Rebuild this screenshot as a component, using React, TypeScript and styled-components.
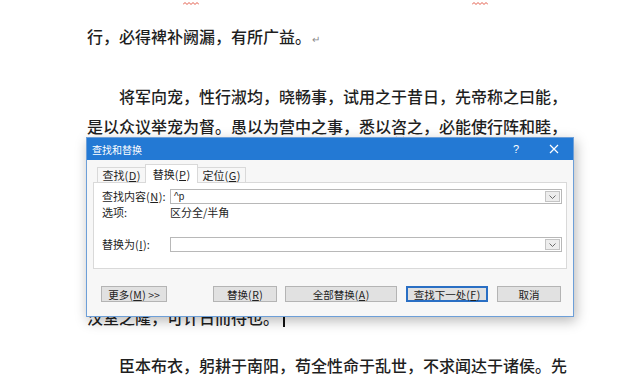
import React from "react";
import styled, { createGlobalStyle } from "styled-components";

const GlobalStyle = createGlobalStyle`
  html, body {
    margin: 0;
    padding: 0;
    background: #fff;
  }
  body {
    font-family: "Noto Sans CJK SC", "Noto Sans", sans-serif;
  }
`;

const Page = styled.div`
  position: relative;
  width: 642px;
  height: 391px;
  overflow: hidden;
  background: #fff;
  padding: 0 0 0 87px;
  box-sizing: border-box;
`;

const MarkRow = styled.div`
  height: 6px;
  display: flex;
  align-items: center;
`;

const Squiggle = styled.svg<{ $gap: number }>`
  margin-left: ${(p) => p.$gap}px;
  display: block;
`;

const Para = styled.div<{ $gap?: number }>`
  margin-top: ${(p) => p.$gap ?? 0}px;
`;

const Line = styled.div<{ $indent?: boolean }>`
  height: 30px;
  line-height: 30px;
  font-size: 16px;
  font-weight: 500;
  color: #1f1f1f;
  white-space: nowrap;
  padding-left: ${(p) => (p.$indent ? 32 : 0)}px;
`;

const ReturnMark = styled.span`
  font-size: 10px;
  font-weight: 400;
  color: #8a8a8a;
  margin-left: 1px;
`;

const Misspelled = styled.span`
  text-decoration: underline wavy #e0402a;
  text-decoration-thickness: 1px;
  text-underline-offset: 3px;
`;

const Caret = styled.span`
  display: inline-block;
  width: 2px;
  height: 15px;
  background: #111;
  margin-left: 4px;
  vertical-align: middle;
`;

/* dialog */

const Dialog = styled.div`
  position: absolute;
  left: 86px;
  top: 137px;
  width: 488px;
  height: 180px;
  box-sizing: border-box;
  background: #f7f7f7;
  border: 1px solid #6d9fd8;
  box-shadow: 2px 4px 12px rgba(0, 0, 0, 0.28);
  display: flex;
  flex-direction: column;
  font-family: "Noto Sans CJK SC", "Noto Sans", sans-serif;
  color: #1e1e1e;
`;

const TitleBar = styled.div`
  height: 22px;
  background: #2379d4;
  color: #fff;
  display: flex;
  align-items: center;
  padding-left: 5px;
  font-size: 10px;
`;

const TitleText = styled.span`
  flex: 1;
`;

const TitleButton = styled.div`
  width: 38px;
  height: 22px;
  display: flex;
  align-items: center;
  justify-content: center;
  font-size: 11px;
  font-family: "Liberation Sans", sans-serif;
`;

const Body = styled.div`
  flex: 1;
  display: flex;
  flex-direction: column;
  padding: 5px 6px 0 6px;
`;

const Tabs = styled.div`
  display: flex;
  align-items: flex-end;
  padding-left: 4px;
  height: 18px;
`;

const Tab = styled.div<{ $active?: boolean; $w: number }>`
  width: ${(p) => p.$w}px;
  height: ${(p) => (p.$active ? 19 : 16)}px;
  box-sizing: border-box;
  display: flex;
  align-items: center;
  justify-content: center;
  font-size: 11px;
  background: ${(p) => (p.$active ? "#fff" : "#f7f7f7")};
  border: 1px solid #d9d9d9;
  border-bottom: ${(p) => (p.$active ? "none" : "1px solid #d9d9d9")};
  margin-right: -1px;
  position: relative;
  z-index: ${(p) => (p.$active ? 2 : 1)};
`;

const Key = styled.span`
  text-decoration: underline;
  padding: 0 0.5px;
`;

const Panel = styled.div`
  background: #fff;
  border: 1px solid #d9d9d9;
  margin-top: -1px;
  padding: 6px 4px 16px 8px;
  display: grid;
  grid-template-columns: 68px 1fr;
  align-items: center;
`;

const Label = styled.div<{ $gapTop?: number; $h?: number }>`
  font-size: 11px;
  height: ${(p) => p.$h ?? 15}px;
  line-height: ${(p) => p.$h ?? 15}px;
  white-space: nowrap;
  margin-top: ${(p) => p.$gapTop ?? 0}px;
`;

const Combo = styled.div<{ $gapTop?: number }>`
  height: 15px;
  box-sizing: border-box;
  border: 1px solid #b8b8b8;
  background: #fff;
  display: flex;
  align-items: center;
  padding-left: 3px;
  font-size: 10px;
  margin-top: ${(p) => p.$gapTop ?? 0}px;
`;

const ComboValue = styled.span`
  flex: 1;
  font-family: "Liberation Sans", sans-serif;
`;

const DropButton = styled.div`
  width: 15px;
  height: 11px;
  box-sizing: border-box;
  border: 1px solid #c4c4c4;
  background: #ededed;
  display: flex;
  align-items: center;
  justify-content: center;
  margin-right: 1px;
`;

const Buttons = styled.div`
  display: flex;
  margin-top: 17px;
  padding-left: 8px;
`;

const Button = styled.div<{ $w: number; $gap?: number; $focus?: boolean }>`
  width: ${(p) => p.$w}px;
  height: 16px;
  margin-left: ${(p) => p.$gap ?? 0}px;
  box-sizing: border-box;
  background: #e1e1e1;
  border: 1px solid ${(p) => (p.$focus ? "#2a6fc4" : "#b4b4b4")};
  box-shadow: ${(p) => (p.$focus ? "inset 0 0 0 1px #2a6fc4" : "none")};
  display: flex;
  align-items: center;
  justify-content: center;
  font-size: 10.5px;
  white-space: nowrap;
  color: #222;
`;

const Chevron = () => (
  <svg width="9" height="6" viewBox="0 0 9 6">
    <path d="M1.5 1.5 L4.5 4.5 L7.5 1.5" fill="none" stroke="#6b6b6b" strokeWidth="1" />
  </svg>
);

const CloseIcon = () => (
  <svg width="10" height="10" viewBox="0 0 10 10">
    <path d="M1 1 L9 9 M9 1 L1 9" stroke="#fff" strokeWidth="1.2" />
  </svg>
);

const Wavy: React.FC<{ gap: number; w: number }> = ({ gap, w }) => {
  const pts: string[] = [];
  for (let x = 0; x <= w; x += 2) pts.push(`${x},${(x / 2) % 2 === 0 ? 3.5 : 1.5}`);
  return (
    <Squiggle $gap={gap} width={w} height={5} viewBox={`0 0 ${w} 5`}>
      <polyline points={pts.join(" ")} fill="none" stroke="#e35a48" strokeWidth="1" />
    </Squiggle>
  );
};

const FindReplaceDialog: React.FC = () => {
  return (
    <Dialog>
      <TitleBar>
        <TitleText>查找和替换</TitleText>
        <TitleButton>?</TitleButton>
        <TitleButton>
          <CloseIcon />
        </TitleButton>
      </TitleBar>
      <Body>
        <Tabs>
          <Tab $w={49}>
            查找(<Key>D</Key>)
          </Tab>
          <Tab $w={53} $active>
            替换(<Key>P</Key>)
          </Tab>
          <Tab $w={49}>
            定位(<Key>G</Key>)
          </Tab>
        </Tabs>
        <Panel>
          <Label>
            查找内容(<Key>N</Key>):
          </Label>
          <Combo>
            <ComboValue>^p</ComboValue>
            <DropButton>
              <Chevron />
            </DropButton>
          </Combo>
          <Label $h={12} $gapTop={2}>
            选项:
          </Label>
          <Label $h={12} $gapTop={2}>
            区分全/半角
          </Label>
          <Label $gapTop={19}>
            替换为(<Key>I</Key>):
          </Label>
          <Combo $gapTop={19}>
            <ComboValue />
            <DropButton>
              <Chevron />
            </DropButton>
          </Combo>
        </Panel>
        <Buttons>
          <Button $w={66}>
            更多(<Key>M</Key>) &gt;&gt;
          </Button>
          <Button $w={64} $gap={46}>
            替换(<Key>R</Key>)
          </Button>
          <Button $w={112} $gap={8}>
            全部替换(<Key>A</Key>)
          </Button>
          <Button $w={82} $gap={9} $focus>
            查找下一处(<Key>F</Key>)
          </Button>
          <Button $w={64} $gap={9}>
            取消
          </Button>
        </Buttons>
      </Body>
    </Dialog>
  );
};

const App: React.FC = () => {
  return (
    <>
      <GlobalStyle />
      <Page>
        <MarkRow>
          <Wavy gap={96} w={16} />
          <Wavy gap={273} w={16} />
        </MarkRow>
        <Para $gap={15}>
          <Line>
            行，必得裨补阙漏，有所广益。<ReturnMark>↵</ReturnMark>
          </Line>
        </Para>
        <Para $gap={30}>
          <Line $indent>将军向宠，性行淑均，晓畅事，试用之于昔日，先帝称之曰能，</Line>
          <Line>
            是以众议举宠为督。愚以为营中之事，悉以<Misspelled>咨</Misspelled>之，必能使行阵和睦，
          </Line>
          <Line>优劣得所。</Line>
        </Para>
        <Para $gap={11}>
          <Line $indent>亲贤臣，远小人，此先汉所以兴隆也；亲小人，远贤臣，此后汉</Line>
          <Line>所以倾颓也。先帝在时，每与臣论此事，未尝不叹息痛恨于桓、</Line>
          <Line>灵也。侍中、尚书、长史、参军，此悉贞良死节之臣，愿陛下亲</Line>
          <Line>之信之，则</Line>
          <Line>
            汉室之隆，可计日而待也。
            <Caret />
          </Line>
        </Para>
        <Para $gap={18}>
          <Line $indent>臣本布衣，躬耕于南阳，苟全性命于乱世，不求闻达于诸侯。先</Line>
        </Para>
        <FindReplaceDialog />
      </Page>
    </>
  );
};

export default App;
